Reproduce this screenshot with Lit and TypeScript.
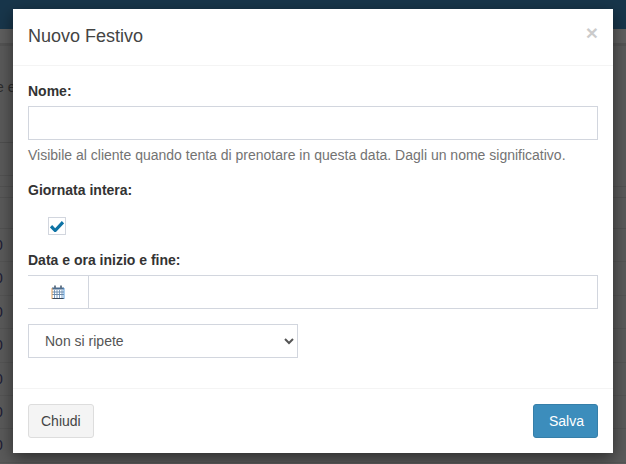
import { LitElement, html, css } from "lit";
import { customElement } from "lit/decorators.js";

@customElement("app-root")
export class AppRoot extends LitElement {
  static styles = css`
    :host {
      display: block;
      position: relative;
      width: 626px;
      height: 464px;
      overflow: hidden;
      font-family: "Liberation Sans", Arial, sans-serif;
      font-size: 14px;
      line-height: 20px;
      color: #333;
      background: #5a5a5a;
    }
    .page { display: flex; flex-direction: column; height: 100%; }
    .topbar { height: 29px; flex: none; background: #18364b; }
    .subbar { height: 17px; flex: none; box-sizing: border-box; background: #5f5f5f; border-bottom: 3px solid #535353; }
    .intro { height: 97px; width: 300px; flex: none; padding-top: 31px; box-sizing: border-box; color: #2c2c2c; white-space: nowrap; margin-left: -4px; border-bottom: 1px solid #4e4e4e; }
    .band { flex: none; box-sizing: border-box; border-bottom: 1px solid #525252; }
    .band.a { height: 33px; width: 300px; }
    .band.b { height: 11px; }
    .band.c { height: 31px; }
    .row { height: 33.4px; flex: none; box-sizing: border-box; border-bottom: 1px solid #545454; padding-top: 6px; color: #1c1c35; margin-left: -5px; }
    .modal {
      position: absolute;
      left: 13px;
      top: 9px;
      width: 600px;
      height: 444px;
      background: #fff;
      box-shadow: 0 5px 15px rgba(0, 0, 0, 0.5);
      display: flex;
      flex-direction: column;
    }
    .head { height: 57px; flex: none; box-sizing: border-box; padding: 15px; display: flex; justify-content: space-between; border-bottom: 1px solid #f4f4f4; }
    h4 { margin: 0; font-size: 18px; font-weight: 400; line-height: 24px; color: #444; }
    .close { font-size: 21px; font-weight: 700; line-height: 17px; color: #000; opacity: 0.2; text-shadow: 0 1px 0 #fff; }
    .body { flex: 1; padding: 15px; display: flex; flex-direction: column; }
    label { display: block; font-weight: 700; margin-bottom: 5px; }
    input[type="text"], select {
      display: block;
      box-sizing: border-box;
      height: 34px;
      border: 1px solid #d2d6de;
      border-radius: 0;
      background: #fff;
      font: inherit;
      color: #555;
      outline: none;
    }
    .full { width: 100%; }
    .help { margin: 5px 0 15px; color: #737373; }
    .check-wrap { height: 45px; box-sizing: border-box; padding: 12px 0 0 20px; display: flex; align-items: flex-start; }
    .check {
      width: 18px; height: 18px; box-sizing: border-box; border: 1px solid #d2d6de;
      display: flex; align-items: center; justify-content: center; background: #fff;
    }
    .group { display: flex; height: 34px; margin-bottom: 15px; }
    .addon {
      width: 60px; flex: none; box-sizing: border-box; display: flex; align-items: center; justify-content: center;
      border-top: 1px solid #d2d6de; border-bottom: 1px solid #d2d6de; background: #fff;
    }
    .group input { flex: 1; min-width: 0; }
    select { width: 270px; padding: 6px 12px; }
    .foot { height: 65px; flex: none; box-sizing: border-box; padding: 15px; display: flex; justify-content: space-between; border-top: 1px solid #f4f4f4; }
    .btn { height: 34px; box-sizing: border-box; padding: 6px 12px; border-radius: 3px; border: 1px solid #ddd; background: #f4f4f4; color: #444; font: inherit; }
    .btn.primary { padding: 6px 13px 6px 15px; background: #3c8dbc; border-color: #367fa9; color: #fff; }
  `;

  render() {
    const rows = ["0", "0", "0", "0", "0", "0", "0"];
    return html`
      <div class="page">
        <div class="topbar"></div>
        <div class="subbar"></div>
        <div class="intro">e e</div>
        <div class="band a"></div>
        <div class="band b"></div>
        <div class="band b"></div>
        <div class="band c"></div>
        ${rows.map((r) => html`<div class="row">${r}</div>`)}
      </div>
      <div class="modal">
        <div class="head">
          <h4>Nuovo Festivo</h4>
          <span class="close">×</span>
        </div>
        <div class="body">
          <label>Nome:</label>
          <input class="full" type="text" />
          <p class="help">Visibile al cliente quando tenta di prenotare in questa data. Dagli un nome significativo.</p>
          <label>Giornata intera:</label>
          <div class="check-wrap">
            <span class="check">
              <svg width="14" height="12" viewBox="0 0 14 12"><path d="M1 6.2 5.2 10.500 13 2.200" fill="none" stroke="#0e73a5" stroke-width="3.2"/></svg>
            </span>
          </div>
          <label>Data e ora inizio e fine:</label>
          <div class="group">
            <span class="addon">
              <svg width="14" height="14" viewBox="0 0 14 14">
                <path d="M1.500 3h11v10h-11z" fill="#fff"/>
                <path d="M3.500 5v8M6 5v8M8.500 5v8M11 5v8" stroke="#7da0c4" stroke-width="1" fill="none"/>
                <path d="M1 7h12M1 9.500h12" stroke="#6e8aa8" stroke-width="1" fill="none"/>
                <path d="M1 3.500h12" stroke="#4a6d92" stroke-width="2" fill="none"/>
                <path d="M1 13.500h12" stroke="#39475a" stroke-width="1" fill="none"/>
                <path d="M1 3v11" stroke="#e3a35f" stroke-width="1" fill="none"/>
                <path d="M13 3v11" stroke="#5c9fdc" stroke-width="1" fill="none"/>
                <path d="M4 .5v3M10 .5v3" stroke="#5d6f82" stroke-width="1.800" fill="none"/>
              </svg>
            </span>
            <input type="text" />
          </div>
          <select>
            <option>Non si ripete</option>
          </select>
        </div>
        <div class="foot">
          <button class="btn">Chiudi</button>
          <button class="btn primary">Salva</button>
        </div>
      </div>
    `;
  }
}
